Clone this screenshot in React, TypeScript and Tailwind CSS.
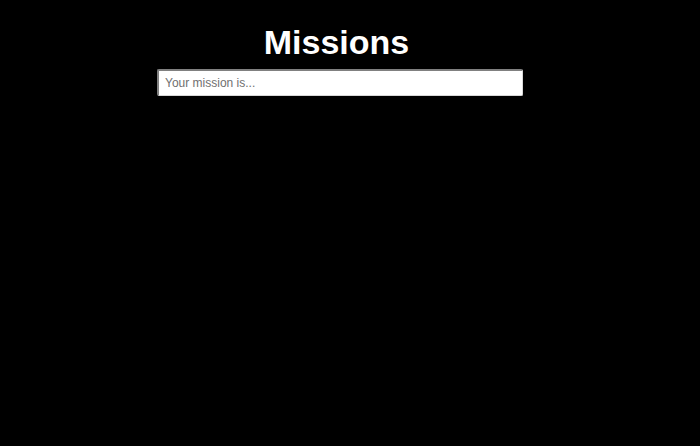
import React, { useState } from 'react';

export default function App() {
  const [mission, setMission] = useState('');

  return (
    <div className="min-h-screen bg-black" style={{ fontFamily: '"Liberation Sans", Arial, sans-serif' }}>
      <div className="w-[366px] ml-[157px] flex flex-col">
        <h1 className="text-white text-[34px] font-bold leading-[39px] text-center pr-[7px] mt-[23px] mb-[7px]">
          Missions
        </h1>
        <input
          value={mission}
          onChange={(e) => setMission(e.target.value)}
          placeholder="Your mission is..."
          className="w-full h-[27px] bg-white text-[12px] text-black px-[6px] outline-none rounded-[2px] border-t-2 border-l-2 border-r border-b border-t-[#808080] border-l-[#808080] border-r-[#d8d8d8] border-b-[#d8d8d8] placeholder:text-[#6f6f6f]"
        />
      </div>
    </div>
  );
}
